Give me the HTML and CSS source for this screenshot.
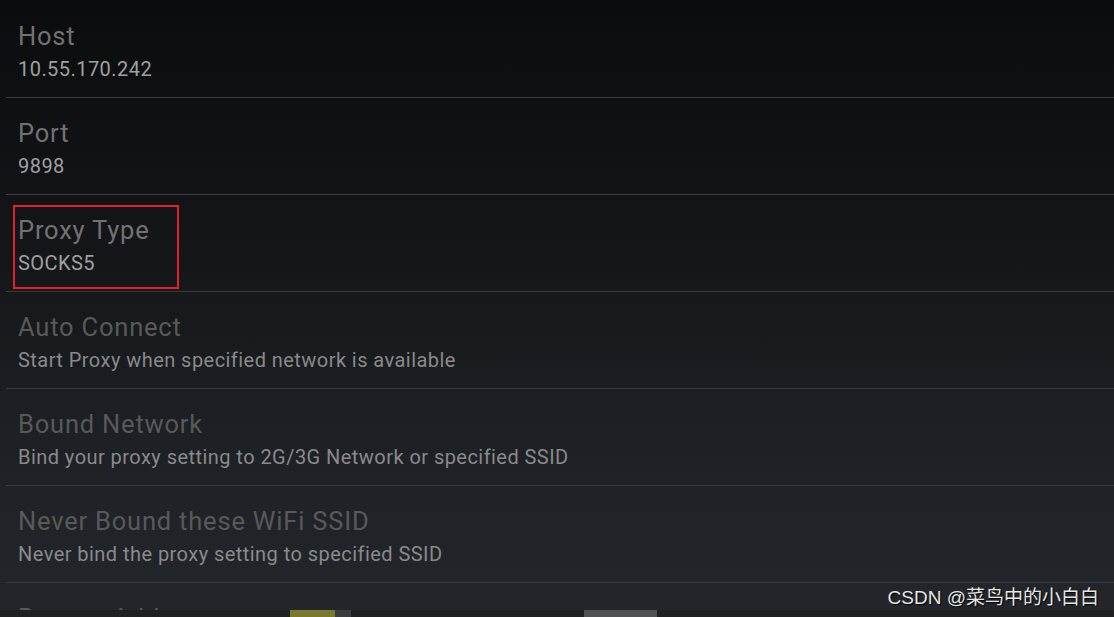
FILE: index.html
```html
<!DOCTYPE html>
<html>
<head>
<meta charset="utf-8">
<link rel="stylesheet" href="styles.css">
</head>
<body>
<div class="screen">
  <div class="list">
    <div class="row">
      <div class="title">Host</div>
      <div class="summary">10.55.170.242</div>
    </div>
    <div class="row">
      <div class="title">Port</div>
      <div class="summary">9898</div>
    </div>
    <div class="row">
      <div class="highlight">
        <div class="title">Proxy Type</div>
        <div class="summary">SOCKS5</div>
      </div>
    </div>
    <div class="row disabled">
      <div class="title">Auto Connect</div>
      <div class="summary">Start Proxy when specified network is available</div>
    </div>
    <div class="row disabled">
      <div class="title">Bound Network</div>
      <div class="summary">Bind your proxy setting to 2G/3G Network or specified SSID</div>
    </div>
    <div class="row disabled">
      <div class="title">Never Bound these WiFi SSID</div>
      <div class="summary">Never bind the proxy setting to specified SSID</div>
    </div>
    <div class="row disabled">
      <div class="title">Bypass Addresses</div>
      <div class="summary">Bypass the addresses</div>
    </div>
  </div>
  <div class="strip">
    <span class="seg seg-yellow"></span>
    <span class="seg seg-dark"></span>
    <span class="seg seg-gap"></span>
    <span class="seg seg-grey"></span>
  </div>
  <div class="watermark">CSDN @菜鸟中的小白白</div>
</div>
</body>
</html>
```

FILE: styles.css
```css
html, body {
  margin: 0;
  padding: 0;
}
body {
  width: 1114px;
  height: 617px;
  overflow: hidden;
  font-family: Roboto, "Noto Sans", sans-serif;
}
.screen {
  position: relative;
  width: 1114px;
  height: 617px;
  display: flex;
  flex-direction: column;
  background: linear-gradient(180deg, #0b0c0e 0%, #121417 35%, #1d2024 70%, #23272c 100%);
  overflow: hidden;
}
.list {
  flex: 1;
  overflow: hidden;
  padding-top: 1px;
  padding-left: 6px;
}
.row {
  height: 96px;
  border-bottom: 1px solid #3a3c3f;
  padding-left: 12px;
  display: flex;
  flex-direction: column;
  align-items: flex-start;
}
.title {
  font-size: 25.5px;
  letter-spacing: 0.8px;
  line-height: 30px;
  margin-top: 20px;
  color: #727272;
}
.summary {
  font-size: 20px;
  letter-spacing: 0.45px;
  line-height: 24px;
  margin-top: 6px;
  color: #a0a0a0;
}
.disabled .title {
  color: #595959;
}
.disabled .summary {
  color: #8a8a8a;
}
.highlight {
  margin-left: -5px;
  margin-top: 10px;
  padding: 0 0 0 3px;
  width: 159px;
  height: 80px;
  border: 2px solid #e3202b;
}
.highlight .title {
  margin-top: 8px;
}
.strip {
  height: 7px;
  flex: none;
  display: flex;
  background: #1e2022;
}
.seg {
  display: block;
  height: 7px;
}
.seg-yellow {
  margin-left: 290px;
  width: 45px;
  background: #7a7930;
}
.seg-dark {
  width: 16px;
  background: #3a3c3e;
}
.seg-gap {
  width: 233px;
}
.seg-grey {
  width: 73px;
  background: #505254;
}
.watermark {
  position: absolute;
  right: 15px;
  bottom: 8px;
  font-family: "Liberation Sans", "Noto Sans CJK SC", sans-serif;
  font-size: 19px;
  line-height: 22px;
  color: #e6e6e6;
  text-shadow: 1px 1px 1px #000;
}
```
